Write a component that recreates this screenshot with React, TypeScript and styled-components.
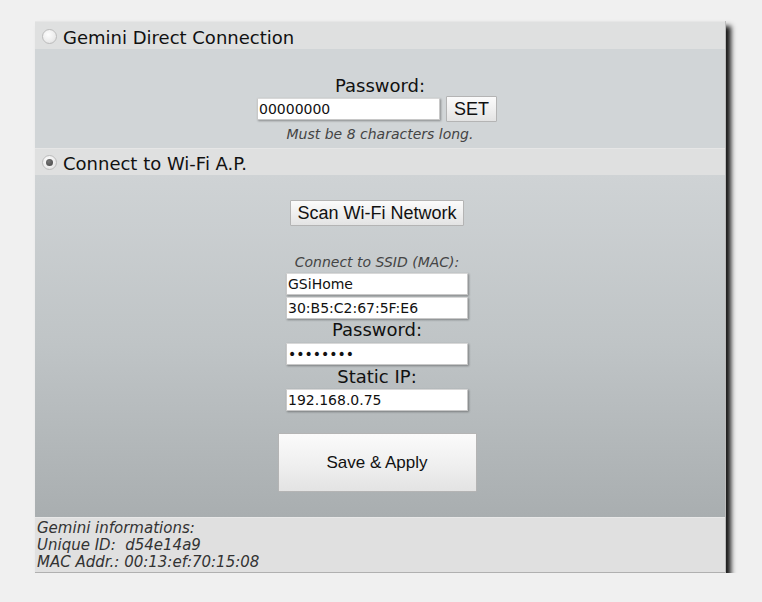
import React from "react";
import styled, { createGlobalStyle } from "styled-components";

const Global = createGlobalStyle`
  html, body { margin: 0; padding: 0; background: #f0f0f0; }
  body { font-family: "DejaVu Sans", Verdana, sans-serif; color: #111; }
`;

const Page = styled.div`
  padding: 21px 0 0 35px;
`;

const Panel = styled.div`
  width: 690px;
  display: flex;
  flex-direction: column;
  background: #d1d5d7;
  box-shadow: 5px 5px 5px #1a1a1a;
  border-right: 1px solid #bbb;
`;

const Header = styled.label<{ $h: number }>`
  display: flex;
  align-items: center;
  height: ${(p) => p.$h}px;
  padding-top: 3px;
  background: #dfe0e0;
  font-size: 18px;
  color: #111;
  border-top: 1px solid #e6e6e6;
  box-sizing: border-box;
`;

const Radio = styled.span<{ $checked?: boolean }>`
  position: relative;
  flex-shrink: 0;
  width: 15px;
  height: 15px;
  border-radius: 50%;
  margin: 0 6px 2px 7px;
  border: 1px solid #bcbcbc;
  background: radial-gradient(circle at 40% 35%, #fdfdfd 0%, #ececec 60%, #d9d9d9 100%);
  box-sizing: border-box;
  &::after {
    content: "";
    display: ${(p) => (p.$checked ? "block" : "none")};
    position: absolute;
    left: 3px;
    top: 3px;
    width: 7px;
    height: 7px;
    border-radius: 50%;
    background: radial-gradient(circle at 40% 35%, #777 0%, #444 100%);
  }
`;

const Section = styled.div<{ $pt: number; $pb: number; $gradient?: boolean }>`
  display: flex;
  flex-direction: column;
  align-items: center;
  padding-top: ${(p) => p.$pt}px;
  padding-bottom: ${(p) => p.$pb}px;
  background: ${(p) =>
    p.$gradient
      ? "linear-gradient(to bottom, #cfd3d5 0%, #bfc4c6 50%, #a9aeb0 100%)"
      : "#d1d5d7"};
`;

const Label = styled.div<{ $mt?: number }>`
  font-size: 18px;
  line-height: 20px;
  color: #111;
  margin-top: ${(p) => p.$mt ?? 0}px;
`;

const Hint = styled.div<{ $mt?: number }>`
  font-size: 14px;
  font-style: italic;
  line-height: 20px;
  color: #444;
  margin-top: ${(p) => p.$mt ?? 0}px;
`;

const Row = styled.div`
  display: flex;
  align-items: center;
  gap: 6px;
  margin-right: 6px;
`;

const Field = styled.input<{ $w: number; $mt?: number }>`
  width: ${(p) => p.$w}px;
  height: 22px;
  box-sizing: border-box;
  margin: ${(p) => p.$mt ?? 0}px 0 0 0;
  padding: 0 1px;
  border: 1px solid #c8c8c8;
  border-top-color: #d8d8d8;
  box-shadow: 1px 1px 2px rgba(0, 0, 0, 0.35);
  background: #fff;
  font-family: "DejaVu Sans", Verdana, sans-serif;
  font-size: 14px;
  color: #111;
  outline: none;
`;

const Column = styled.div`
  display: flex;
  flex-direction: column;
  align-items: center;
  margin-right: 6px;
`;

const Button = styled.button<{ $w: number; $h: number; $fs: number; $mt?: number }>`
  width: ${(p) => p.$w}px;
  height: ${(p) => p.$h}px;
  margin-top: ${(p) => p.$mt ?? 0}px;
  box-sizing: border-box;
  padding: 0;
  font-family: "Liberation Sans", Arial, sans-serif;
  font-size: ${(p) => p.$fs}px;
  color: #111;
  background: linear-gradient(to bottom, #fbfbfb 0%, #f0f0f0 50%, #e3e3e3 100%);
  border: 1px solid #b4b4b4;
  border-radius: 1px;
`;

const Footer = styled.div`
  background: #e0e0e0;
  border-top: 1px solid #e8e8e8;
  padding: 2px 0 1px 2px;
  font-size: 15px;
  font-style: italic;
  line-height: 17px;
  color: #333;
  border-bottom: 1px solid #b0b0b0;
`;

export default function App() {
  return (
    <>
      <Global />
      <Page>
        <Panel>
          <Header $h={28}>
            <Radio />
            Gemini Direct Connection
          </Header>
          <Section $pt={27} $pb={4}>
            <Label>Password:</Label>
            <Row>
              <Field $w={183} defaultValue="00000000" />
              <Button $w={51} $h={26} $fs={18}>SET</Button>
            </Row>
            <Hint $mt={2}>Must be 8 characters long.</Hint>
          </Section>
          <Header $h={27}>
            <Radio $checked />
            Connect to Wi-Fi A.P.
          </Header>
          <Section $pt={25} $pb={25} $gradient>
            <Column>
              <Button $w={174} $h={26} $fs={18}>Scan Wi-Fi Network</Button>
              <Hint $mt={26}>Connect to SSID (MAC):</Hint>
              <Field $w={182} $mt={1} defaultValue="GSiHome" />
              <Field $w={182} $mt={2} defaultValue="30:B5:C2:67:5F:E6" />
              <Label $mt={1}>Password:</Label>
              <Field $w={182} $mt={3} type="password" defaultValue="12345678" />
              <Label $mt={2}>Static IP:</Label>
              <Field $w={182} $mt={2} defaultValue="192.168.0.75" />
              <Button $w={199} $h={59} $fs={17} $mt={22}>Save &amp; Apply</Button>
            </Column>
          </Section>
          <Footer>
            <div>Gemini informations:</div>
            <div>Unique ID:&nbsp; d54e14a9</div>
            <div>MAC Addr.: 00:13:ef:70:15:08</div>
          </Footer>
        </Panel>
      </Page>
    </>
  );
}
